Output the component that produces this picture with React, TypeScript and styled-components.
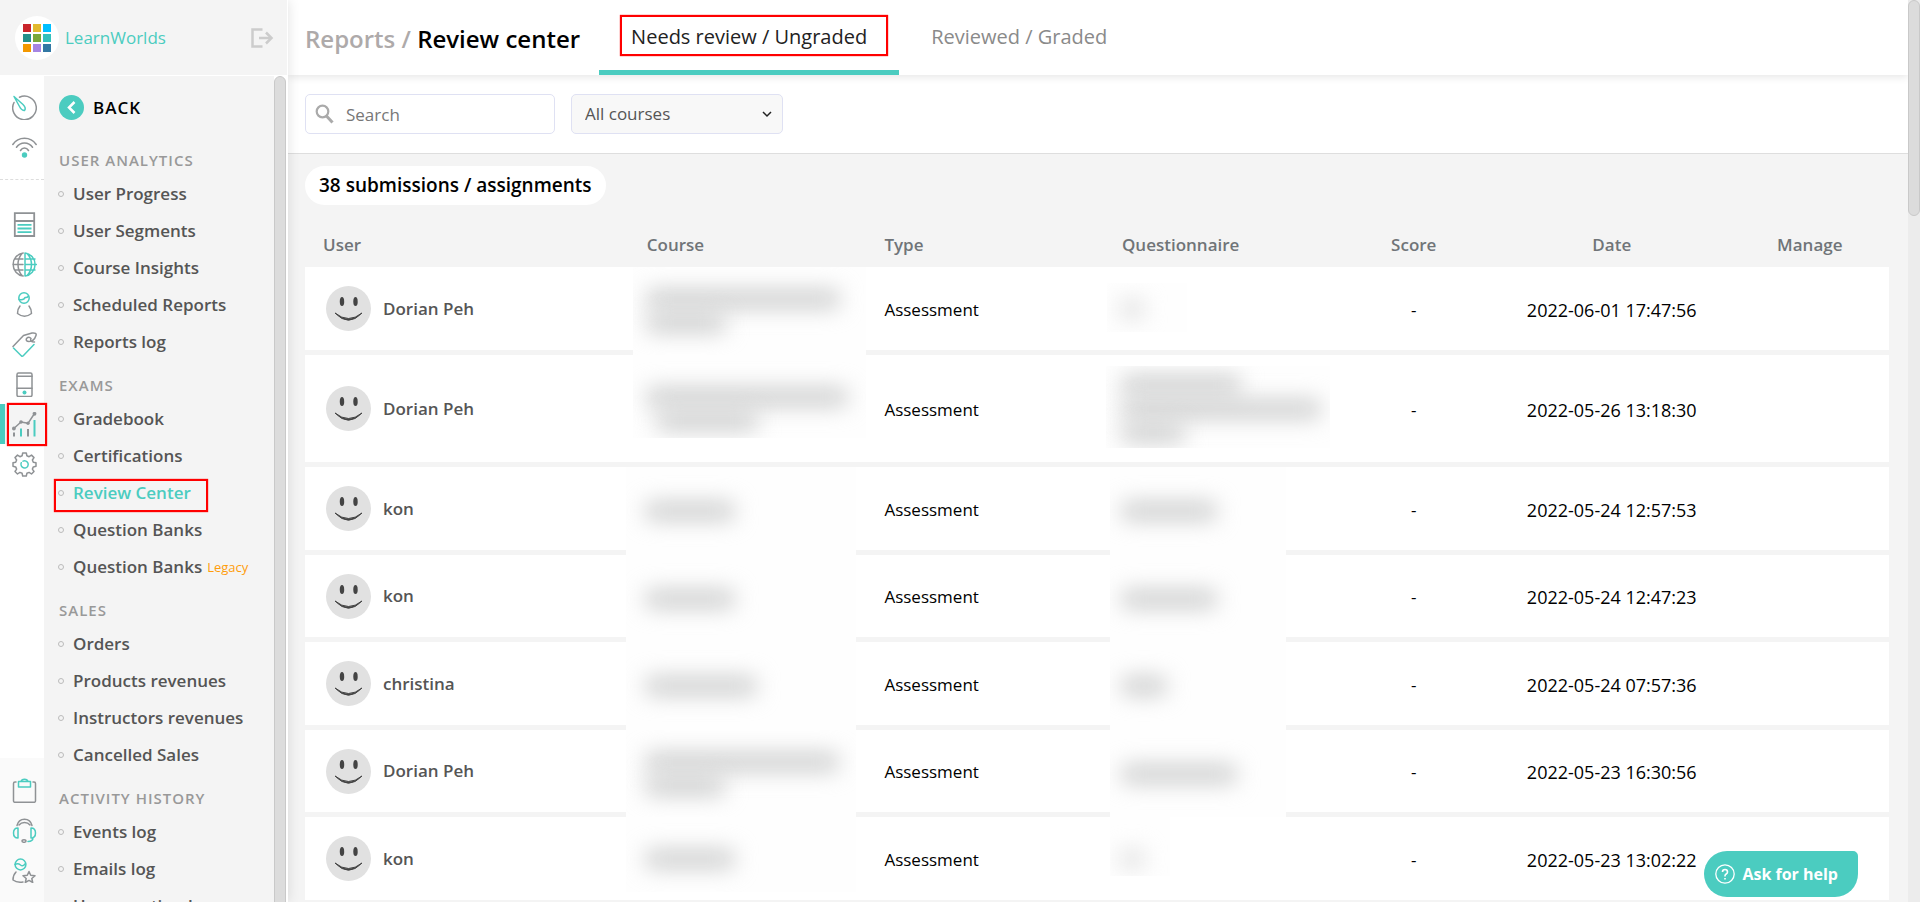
import React from 'react';
import styled, { createGlobalStyle, css } from 'styled-components';

const teal = '#4bccc0';
const grey = '#8f9295';
const panel = '#f4f4f4';

const GlobalStyle = createGlobalStyle`
  *, *::before, *::after { box-sizing: border-box; }
  body {
    margin: 0;
    background: ${panel};
    color: #000;
    font-family: 'Open Sans', 'Noto Sans', sans-serif;
    font-size: 17px;
    line-height: 24px;
  }
  a { color: inherit; text-decoration: none; }
  button, input, select { font: inherit; }
  ul { list-style: none; margin: 0; padding: 0; }
`;

/* ---------- shell ---------- */

const Shell = styled.div`
  display: grid;
  grid-template-columns: 288px minmax(0, 1fr) 12px;
  grid-template-rows: minmax(0, 1fr);
  height: 100vh;
  overflow: hidden;
`;

const Sidebar = styled.aside`
  display: grid;
  grid-template-rows: 76px minmax(0, 1fr);
  border-right: 1px solid #fff;
  background: ${panel};
  box-shadow: 0 0 12px rgba(0, 0, 0, 0.12);
  z-index: 3;
`;

const Brand = styled.div`
  display: flex;
  align-items: center;
  padding: 0 13px 0 15px;
  border-bottom: 1px solid #fff;
`;

const LogoDisc = styled.div`
  display: grid;
  place-items: center;
  width: 44px;
  height: 44px;
  border-radius: 50%;
  background: #fff;
`;

const BrandName = styled.a`
  flex: 1;
  margin-left: 6px;
  color: ${teal};
  font-size: 17px;
`;

const IconButton = styled.button`
  display: flex;
  padding: 0;
  border: 0;
  background: none;
  color: #ccc;
`;

const SidebarBody = styled.div`
  display: grid;
  grid-template-columns: 44px minmax(0, 1fr) 13px;
  grid-template-rows: minmax(0, 1fr);
  min-height: 0;
`;

const highlight = css`
  position: relative;
  &::after {
    content: '';
    position: absolute;
    border: 2px solid #f00;
    box-shadow: 0 0 1px #f00;
    pointer-events: none;
  }
`;

const Rail = styled.nav`
  display: flex;
  flex-direction: column;
  justify-content: space-between;
  background: #fff;
`;

const RailGroup = styled.ul<{ $shade?: boolean; $divided?: boolean }>`
  padding: 12px 0;
  ${p => p.$shade && 'background: #fafafa;'}
  ${p => p.$divided && 'border-bottom: 1px dashed #ddd; margin-bottom: 12px; padding-top: 11px;'}
`;

const RailLink = styled.a<{ $active?: boolean }>`
  display: flex;
  align-items: center;
  height: 40px;
  padding-left: 12px;
  svg { display: block; }
  ${p => p.$active && css`
    ${highlight}
    padding-left: 7px;
    border-left: 5px solid ${teal};
    background: ${panel};
    &::after { inset: -1px -3px -2px 2px; }
  `}
`;

const Menu = styled.nav`
  padding: 19px 0 0 15px;
  overflow: hidden;
`;

const BackLink = styled.button`
  display: flex;
  align-items: center;
  gap: 9px;
  padding: 0;
  border: 0;
  background: none;
  color: #000;
  font-size: 17px;
  font-weight: 600;
  letter-spacing: 1px;
  line-height: 25px;
`;

const BackDisc = styled.span`
  display: grid;
  place-items: center;
  width: 25px;
  height: 25px;
  border-radius: 50%;
  background: ${teal};
`;

const MenuHeading = styled.h2<{ $first?: boolean }>`
  margin: ${p => (p.$first ? 30 : 15)}px 0 5px;
  color: #999;
  font-size: 15px;
  font-weight: 600;
  line-height: 20px;
  letter-spacing: 1px;
  text-transform: uppercase;
`;

const MenuLink = styled.a<{ $active?: boolean }>`
  display: flex;
  align-items: center;
  height: 37px;
  color: #555;
  font-size: 17px;
  font-weight: 600;
  white-space: nowrap;
  &::before {
    content: '';
    width: 6px;
    height: 6px;
    margin-left: -1px;
    margin-right: 9px;
    border: 1px solid #bbb;
    border-radius: 50%;
  }
  ${p => p.$active && css`
    ${highlight}
    color: ${teal};
    &::after { inset: 5px 66px -1px -5px; }
  `}
`;

const Legacy = styled.small`
  margin-left: 5px;
  color: #ff9d0a;
  font-size: 13px;
  font-weight: 400;
`;

const Track = styled.div<{ $side?: boolean }>`
  background: #ececec;
  ${p => p.$side && 'background: #fff; overflow: hidden;'}
`;

const Thumb = styled.div<{ $size: string }>`
  height: ${p => p.$size};
  width: 12px;
  border: 1px solid #c9c9c9;
  border-radius: 6px;
  background: #dcdcdc;
`;

/* ---------- main area ---------- */

const Main = styled.main`
  min-width: 0;
  overflow: hidden;
`;

const TopBar = styled.header`
  display: flex;
  align-items: stretch;
  position: relative;
  height: 75px;
  padding-left: 17px;
  background: #fff;
  box-shadow: 0 2px 8px rgba(0, 0, 0, 0.1);
`;

const Title = styled.h1`
  align-self: center;
  margin: 2px 19px 0 0;
  font-size: 24px;
  font-weight: 600;
  line-height: 32px;
  white-space: nowrap;
`;

const Muted = styled.span`
  color: #aeaaaa;
`;

const Tab = styled.a<{ $active?: boolean }>`
  display: flex;
  align-items: center;
  height: 75px;
  padding: 4px 32px 5px;
  color: #8a8a8a;
  font-size: 20px;
  white-space: nowrap;
  ${p => p.$active && css`
    ${highlight}
    padding-bottom: 0;
    border-bottom: 5px solid ${teal};
    color: #222;
    &::after { inset: 15px 11px 14px 21px; }
  `}
`;

const Filters = styled.form`
  display: flex;
  gap: 16px;
  padding: 19px 17px;
  border-bottom: 1px solid #dedede;
  background: #fff;
`;

const Field = styled.label`
  position: relative;
  svg {
    position: absolute;
    top: 10px;
    left: 10px;
    pointer-events: none;
  }
`;

const SearchInput = styled.input`
  width: 250px;
  height: 40px;
  padding: 0 12px 0 40px;
  border: 1px solid #dfe1f3;
  border-radius: 5px;
  background: #fff;
  font-size: 17px;
  outline: none;
  &::placeholder { color: #777; opacity: 1; }
`;

const CourseSelect = styled.select`
  appearance: none;
  width: 212px;
  height: 40px;
  padding: 0 13px;
  border: 1px solid #dfe1f3;
  border-radius: 5px;
  background: #f8f8f8;
  color: #555;
  font-size: 17px;
`;

const Chevron = styled.span`
  svg { left: auto; top: 14px; right: 10px; }
`;

const Content = styled.section`
  padding: 12px 19px 20px 17px;
`;

const Count = styled.p`
  width: fit-content;
  margin: 0;
  padding: 0 14px;
  border-radius: 20px;
  background: #fff;
  font-size: 19px;
  font-weight: 600;
  line-height: 39px;
`;

const Grid = styled.table`
  width: 100%;
  margin-top: 17px;
  border-collapse: separate;
  border-spacing: 0;
  table-layout: fixed;
`;

const HeadCell = styled.th<{ $w: number; $center?: boolean }>`
  width: ${p => p.$w}%;
  height: 45px;
  padding: 0 ${p => (p.$center ? 0 : 25)}px 0;
  color: #707478;
  font-weight: 600;
  text-align: ${p => (p.$center ? 'center' : 'left')};
  &:first-child { padding-left: 18px; }
`;

const Row = styled.tr<{ $h: number }>`
  height: ${p => p.$h + 5}px;
`;

const Cell = styled.td<{ $center?: boolean; $large?: boolean }>`
  position: relative;
  padding: 2px ${p => (p.$center ? 0 : 25)}px 0;
  border-bottom: 5px solid ${panel};
  background: #fff;
  font-size: ${p => (p.$large ? 18 : 17)}px;
  text-align: ${p => (p.$center ? 'center' : 'left')};
  white-space: nowrap;
`;

const UserCell = styled(Cell)`
  padding: 0 21px;
`;

const User = styled.a`
  display: flex;
  align-items: center;
  gap: 12px;
  color: #555;
  font-weight: 600;
`;

/* Redaction patch laid over a cell and, where $bridge is set, over the gap below its row. */
const Patch = styled.div<{ $left: number; $width: number; $bridge?: boolean; $top: number; $inset: number }>`
  position: absolute;
  z-index: 1;
  top: ${p => p.$top}px;
  bottom: ${p => (p.$bridge ? -5 : p.$inset)}px;
  left: ${p => p.$left}px;
  width: ${p => p.$width}px;
  display: flex;
  flex-direction: column;
  justify-content: center;
  gap: 6px;
  padding-top: ${p => Math.max(0, p.$inset - p.$top)}px;
  overflow: hidden;
  background: #fefefe;
`;

const Smudge = styled.span<{ $indent: number; $width: number; $faint?: boolean }>`
  flex: none;
  width: ${p => p.$width}px;
  height: 18px;
  margin-left: ${p => p.$indent}px;
  border-radius: 4px;
  background: ${p => (p.$faint ? '#dedede' : '#cbcccc')};
  filter: blur(11px);
`;

const HelpButton = styled.button`
  position: fixed;
  right: 62px;
  bottom: 5px;
  z-index: 4;
  display: flex;
  align-items: center;
  gap: 7px;
  height: 46px;
  padding: 0 20px 0 11px;
  border: 0;
  border-radius: 23px 5px 23px 23px;
  background: ${teal};
  color: #fff;
  font-size: 16px;
  font-weight: 700;
  white-space: nowrap;
`;

/* ---------- drawings ---------- */

const squares = ['#c9252b', '#e2b92e', '#00bfff', '#23908b', '#7aa838', '#33c0bd', '#f39800', '#a685e2', '#3278a4'];

const Logo = () => (
  <svg width="28" height="28" viewBox="0 0 28 28" aria-hidden>
    {squares.map((c, i) => (
      <rect key={c} x={(i % 3) * 10} y={Math.floor(i / 3) * 10} width="8" height="8" fill={c} />
    ))}
  </svg>
);

const Draw = ({ children }: { children: React.ReactNode }) => (
  <svg width="25" height="25" viewBox="0 0 25 25" fill="none" stroke={grey} strokeWidth="1.5" strokeLinecap="round" strokeLinejoin="round" aria-hidden>
    {children}
  </svg>
);

const icons: Record<string, React.ReactNode> = {
  Dashboard: (
    <Draw>
      <path d="M7.5 2.2A11.8 11.8 0 1 1 2 7.500" />
      <path stroke={teal} d="M2 1.500L11 9.500Q14.500 13 12.500 15.500Q9.500 15.500 7.500 11.500Z" />
    </Draw>
  ),
  Feed: (
    <Draw>
      <path d="M.8 9.500Q5 3.200 12.500 3.200T24.200 9.500M4.500 12.300Q7.500 8 12.500 8T20.500 12.300M8.500 15.500Q10 13 12.500 13T16.500 15.500" />
      <circle cx="12.500" cy="20" r="2.700" fill={teal} stroke="none" />
    </Draw>
  ),
  Courses: (
    <Draw>
      <g strokeLinejoin="miter" strokeWidth="1.800">
        <path d="M2.800 1.200H22.200V24H2.800ZM2.800 9H22.200" />
        <path stroke={teal} strokeLinecap="butt" d="M5.500 12.800H19.500M5.500 16.500H19.500M5.500 20.200H19.500" />
      </g>
    </Draw>
  ),
  Website: (
    <Draw>
      <path d="M11.200 1A11.600 11.600 0 0 0 11.200 24M10 1.500Q6 6 6 12.500T10 23.500M1 12.500H11M2.500 7H11M2.500 18H11" />
      <path stroke={teal} d="M13 1A11.600 11.600 0 0 1 13 24ZM15 1.500Q19.500 6 19.500 12.500T15 23.500M13 12.500H24.500M13 7H23M13 18H23" />
    </Draw>
  ),
  Users: (
    <Draw>
      <circle cx="12" cy="6" r="5.200" stroke={teal} />
      <path stroke={teal} d="M7 7.500Q12 8.500 13 5.500Q15 6 16.500 4" />
      <path d="M8 14Q5.500 17 5.500 21.500Q9 24.200 12.500 24.200T19.500 21.500Q19.500 17 17 14" />
    </Draw>
  ),
  Marketing: (
    <Draw>
      <path d="M1 14.500L11.500 3.500L20 1Q25 .5 24 3.500Q22 9.500 17 9.500Q13.500 9.500 14.500 6.500Q17 4 19 6.500Q17.500 10 22.500 10" />
      <path stroke={teal} d="M1.500 16L9.500 24Q10.500 24.500 11.500 23.500L22 12.500" />
    </Draw>
  ),
  Mobile: (
    <Draw>
      <rect x="5" y="1" width="15" height="23.500" rx="1.500" />
      <path d="M5 4.200H20M5 16.200H20" />
      <circle cx="12.500" cy="20.500" r="2" fill={teal} stroke="none" />
    </Draw>
  ),
  Reports: (
    <Draw>
      <path d="M1.800 16.500L9 10L16 11.300L22.500 1.500" />
      <g fill={grey} stroke="none">
        <circle cx="1.900" cy="16.500" r="1.900" />
        <circle cx="9" cy="10" r="1.800" />
        <circle cx="16" cy="11.300" r="1.700" />
        <circle cx="22.500" cy="1.800" r="1.900" />
      </g>
      <path strokeLinecap="butt" strokeWidth="2" d="M2 20.500V24.500M16 17V24.500" />
      <path stroke={teal} strokeLinecap="butt" strokeWidth="2" d="M9 16.500V24.500M22.500 8V24.500" />
    </Draw>
  ),
  Settings: (
    <Draw>
      <path d="M10.700 1H14.300L14.900 3.800L17.100 4.700L19.500 3.100L22 5.600L20.400 8L21.300 10.200L24 10.800V14.300L21.300 14.900L20.400 17.100L22 19.500L19.500 22L17.100 20.400L14.900 21.300L14.300 24H10.700L10.100 21.300L7.900 20.400L5.500 22L3 19.500L4.600 17.100L3.700 14.900L1 14.300V10.800L3.700 10.200L4.600 8L3 5.600L5.500 3.100L7.900 4.700L10.100 3.800Z" />
      <path stroke={teal} d="M9 12.500A3.600 3.600 0 1 0 11 9.200M9 11.500L9.300 10.700" />
    </Draw>
  ),
  Tasks: (
    <Draw>
      <path d="M4 4H3Q1.500 4 1.500 5.500V23Q1.500 24.300 3 24.300H22Q23.500 24.300 23.500 23V5.500Q23.500 4 22 4H21" />
      <path stroke={teal} d="M6.500 3.500H9Q9.500 1.200 12.500 1.200T16 3.500H18.500V9H6.500ZM9.500 3.500H15.500" />
    </Draw>
  ),
  Support: (
    <Draw>
      <path d="M5 7.500Q6.500 1.200 12.500 1.200T20 7.500M7 7Q9 4.500 12.500 4.500T18 7" />
      <path stroke={teal} d="M6 10V20Q1.500 20 1.500 15T6 10ZM19 10V20Q23.500 20 23.500 15T19 10M21 19.500Q21 23.500 16 23.500" />
      <ellipse cx="12" cy="23" rx="2" ry="1.300" />
    </Draw>
  ),
  Experts: (
    <Draw>
      <circle cx="8.500" cy="6.500" r="5.400" stroke={teal} />
      <path stroke={teal} d="M3 6.500Q6 5 8.500 7T13.500 5.500" />
      <path d="M4 14Q1 17 1 22Q5 25 11 24" />
      <path d="M17 13.500L18.700 17.300L23 17.800L19.800 20.500L20.700 24.500L17 22.400L13.300 24.500L14.200 20.500L11 17.800L15.300 17.300Z" />
    </Draw>
  ),
};

const Smiley = () => (
  <svg width="45" height="45" viewBox="0 0 45 45" aria-hidden>
    <circle cx="22.500" cy="22.500" r="22.500" fill="#e1e1e1" />
    <ellipse cx="16" cy="15.500" rx="2.200" ry="4.500" fill="#444" />
    <ellipse cx="29.500" cy="15.500" rx="2.200" ry="4.500" fill="#444" />
    <path d="M9 27Q22.500 38 36 27Q22.500 41.500 9 27Z" fill="#444" stroke="#444" strokeLinejoin="round" />
  </svg>
);

/* ---------- data ---------- */

const menu: { title: string; items: string[] }[] = [
  { title: 'User analytics', items: ['User Progress', 'User Segments', 'Course Insights', 'Scheduled Reports', 'Reports log'] },
  { title: 'Exams', items: ['Gradebook', 'Certifications', 'Review Center', 'Question Banks', 'Question Banks|Legacy'] },
  { title: 'Sales', items: ['Orders', 'Products revenues', 'Instructors revenues', 'Cancelled Sales'] },
  { title: 'Activity history', items: ['Events log', 'Emails log', 'User creation log'] },
];

type Bar = [indent: number, width: number, faint?: boolean];
type Hidden = { left: number; width: number; bridge?: boolean; top?: number; inset?: number; bars: Bar[] };

const narrow = (bars: Bar[]): Hidden => ({ left: 4, width: 230, bridge: true, bars });
const quiz = (bars: Bar[]): Hidden => ({ left: 13, width: 176, bridge: true, bars });

const rows: { user: string; date: string; h: number; course: Hidden; quiz: Hidden }[] = [
  {
    user: 'Dorian Peh', date: '2022-06-01 17:47:56', h: 83,
    course: { left: 11, width: 233, bridge: true, top: 0, bars: [[14, 192], [14, 78]] },
    quiz: { left: 10, width: 80, top: 16, inset: 18, bars: [[14, 22, true]] },
  },
  {
    user: 'Dorian Peh', date: '2022-05-26 13:18:30', h: 107,
    course: { left: 11, width: 233, inset: 24, bars: [[14, 200], [24, 100]] },
    quiz: { left: 9, width: 224, top: 11, inset: 14, bars: [[16, 118], [16, 198], [16, 62]] },
  },
  { user: 'kon', date: '2022-05-24 12:57:53', h: 83, course: narrow([[20, 88]]), quiz: quiz([[12, 94]]) },
  { user: 'kon', date: '2022-05-24 12:47:23', h: 82, course: narrow([[20, 88]]), quiz: quiz([[12, 94]]) },
  { user: 'christina', date: '2022-05-24 07:57:36', h: 83, course: narrow([[20, 110]]), quiz: quiz([[12, 44]]) },
  { user: 'Dorian Peh', date: '2022-05-23 16:30:56', h: 82, course: narrow([[20, 192], [20, 78]]), quiz: quiz([[12, 114]]) },
  {
    user: 'kon', date: '2022-05-23 13:02:22', h: 83,
    course: { left: 4, width: 230, inset: 8, bars: [[20, 88]] },
    quiz: { left: 13, width: 60, inset: 24, bars: [[11, 22, true]] },
  },
];

const Redacted = ({ area }: { area: Hidden }) => (
  <Patch $left={area.left} $width={area.width} $bridge={area.bridge} $top={area.top ?? 0} $inset={area.inset ?? 0}>
    {area.bars.map(([indent, width, faint], i) => (
      <Smudge key={i} $indent={indent} $width={width} $faint={faint} />
    ))}
  </Patch>
);

const RailItem = ({ name, active }: { name: string; active?: boolean }) => (
  <li>
    <RailLink href="#" aria-label={name} $active={active}>{icons[name]}</RailLink>
  </li>
);

export default function App() {
  return (
    <>
      <GlobalStyle />
      <Shell>
        <Sidebar>
          <Brand>
            <LogoDisc><Logo /></LogoDisc>
            <BrandName href="#">LearnWorlds</BrandName>
            <IconButton type="button" aria-label="Log out">
              <svg width="23" height="20" viewBox="0 0 23 20" fill="none" stroke="currentColor" strokeWidth="2.500">
                <path d="M11.500 1.500H1.500V18.500H11.500M8 10H19" />
                <path d="M15 4.500L20.500 10L15 15.500" />
              </svg>
            </IconButton>
          </Brand>
          <SidebarBody>
            <Rail aria-label="Sections">
              <div>
                <RailGroup $divided>
                  {['Dashboard', 'Feed'].map(n => <RailItem key={n} name={n} />)}
                </RailGroup>
                <RailGroup>
                  {['Courses', 'Website', 'Users', 'Marketing', 'Mobile', 'Reports', 'Settings'].map(n => (
                    <RailItem key={n} name={n} active={n === 'Reports'} />
                  ))}
                </RailGroup>
              </div>
              <RailGroup $shade>
                {['Tasks', 'Support', 'Experts'].map(n => <RailItem key={n} name={n} />)}
              </RailGroup>
            </Rail>
            <Menu aria-label="Reports">
              <BackLink type="button">
                <BackDisc>
                  <svg width="9" height="13" viewBox="0 0 9 13" fill="none" stroke="#fff" strokeWidth="2.500" aria-hidden>
                    <path d="M7.500 1L2 6.500L7.500 12" />
                  </svg>
                </BackDisc>
                BACK
              </BackLink>
              {menu.map((group, i) => (
                <React.Fragment key={group.title}>
                  <MenuHeading $first={i === 0}>{group.title}</MenuHeading>
                  <ul>
                    {group.items.map(item => {
                      const [label, tag] = item.split('|');
                      return (
                        <li key={item}>
                          <MenuLink href="#" $active={label === 'Review Center'}>
                            {label}
                            {tag && <Legacy>{tag}</Legacy>}
                          </MenuLink>
                        </li>
                      );
                    })}
                  </ul>
                </React.Fragment>
              ))}
            </Menu>
            <Track $side><Thumb $size="calc(100% + 6px)" /></Track>
          </SidebarBody>
        </Sidebar>

        <Main>
          <TopBar>
            <Title><Muted>Reports / </Muted>Review center</Title>
            <Tab href="#" $active>Needs review / Ungraded</Tab>
            <Tab href="#">Reviewed / Graded</Tab>
          </TopBar>
          <Filters>
            <Field>
              <svg width="19" height="20" viewBox="0 0 19 20" fill="none" stroke="#aaa" aria-hidden>
                <circle cx="7.500" cy="7.500" r="5.800" strokeWidth="2.200" />
                <path d="M11.500 12L17.500 18.500" strokeWidth="3" />
              </svg>
              <SearchInput type="search" placeholder="Search" aria-label="Search" />
            </Field>
            <Field>
              <CourseSelect aria-label="Course" defaultValue="all">
                <option value="all">All courses</option>
              </CourseSelect>
              <Chevron>
                <svg width="12" height="12" viewBox="0 0 12 12" fill="none" stroke="#222" strokeWidth="1.500" aria-hidden>
                  <path d="M2 4L6 8L10 4" />
                </svg>
              </Chevron>
            </Field>
          </Filters>
          <Content>
            <Count>38 submissions / assignments</Count>
            <Grid>
              <thead>
                <tr>
                  <HeadCell scope="col" $w={20}>User</HeadCell>
                  <HeadCell scope="col" $w={15}>Course</HeadCell>
                  <HeadCell scope="col" $w={15}>Type</HeadCell>
                  <HeadCell scope="col" $w={15}>Questionnaire</HeadCell>
                  <HeadCell scope="col" $w={10} $center>Score</HeadCell>
                  <HeadCell scope="col" $w={15} $center>Date</HeadCell>
                  <HeadCell scope="col" $w={10} $center>Manage</HeadCell>
                </tr>
              </thead>
              <tbody>
                {rows.map(r => (
                  <Row key={r.date} $h={r.h}>
                    <UserCell><User href="#"><Smiley />{r.user}</User></UserCell>
                    <Cell><Redacted area={r.course} /></Cell>
                    <Cell>Assessment</Cell>
                    <Cell><Redacted area={r.quiz} /></Cell>
                    <Cell $center>-</Cell>
                    <Cell $center $large>{r.date}</Cell>
                    <Cell $center />
                  </Row>
                ))}
              </tbody>
            </Grid>
          </Content>
        </Main>

        <Track><Thumb $size="24%" /></Track>
      </Shell>

      <HelpButton type="button">
        <svg width="20" height="20" viewBox="0 0 20 20" fill="none" stroke="#fff" strokeWidth="1.300" aria-hidden>
          <circle cx="10" cy="10" r="9.200" />
          <path strokeWidth="1.600" d="M7.500 8Q7.500 5.500 10 5.500T12.500 8Q12.500 9.200 11.200 10T10 12V12.500M10 14V15.500" />
        </svg>
        Ask for help
      </HelpButton>
    </>
  );
}
